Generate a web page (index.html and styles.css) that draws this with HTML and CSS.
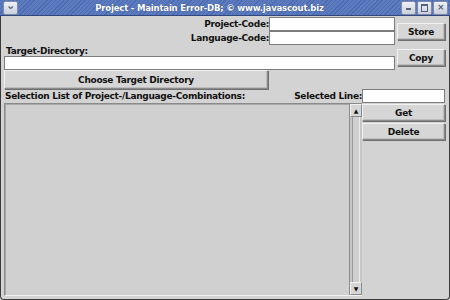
FILE: index.html
```html
<!DOCTYPE html>
<html lang="en">
<head>
    <meta charset="utf-8">
    <title>Project - Maintain Error-DB</title>
    <link rel="stylesheet" href="styles.css">
</head>
<body>
<div class="window">
    <div class="titlebar">
        <div class="tbtn menu"><span class="chev">&#8964;</span></div>
        <div class="title">Project - Maintain Error-DB; &copy; www.javascout.biz</div>
        <div class="tbtns">
            <div class="tbtn"><span class="ico-min"></span></div>
            <div class="tbtn"><span class="ico-max"></span></div>
            <div class="tbtn"><span class="ico-close">&times;</span></div>
        </div>
    </div>
    <div class="content">
        <div class="rowA">
            <div class="codes">
                <div class="line"><span class="label">Project-Code:</span><div class="field codeField"></div></div>
                <div class="line"><span class="label">Language-Code:</span><div class="field codeField"></div></div>
            </div>
            <div class="side"><div class="button">Store</div></div>
        </div>
        <div class="rowB">
            <div class="dir">
                <div class="label">Target-Directory:</div>
                <div class="field dirField"></div>
            </div>
            <div class="side"><div class="button copy">Copy</div></div>
        </div>
        <div class="rowC">
            <div class="button choose">Choose Target Directory</div>
        </div>
        <div class="rowD">
            <span class="label">Selection List of Project-/Language-Combinations:</span>
            <span class="label sel">Selected Line:</span>
            <div class="field selField"></div>
        </div>
        <div class="rowE">
            <div class="list">
                <div class="listArea"></div>
                <div class="scrollbar">
                    <div class="arrow up">&#9650;</div>
                    <div class="track"></div>
                    <div class="arrow down">&#9660;</div>
                </div>
            </div>
            <div class="actions">
                <div class="button">Get</div>
                <div class="button">Delete</div>
            </div>
        </div>
    </div>
</div>
</body>
</html>
```

FILE: styles.css
```css
body{
    margin: 0;
    background: #d3d3d3;
    font-family: "DejaVu Sans", sans-serif;
    font-weight: bold;
    font-size: 9px;
    letter-spacing: -0.3px;
    color: #111;
}
.window{
    width: 450px;
    height: 300px;
    box-sizing: border-box;
    border: 1px solid #3a3a3a;
    border-top: none;
    border-radius: 0 0 4px 4px;
    background: #d3d3d3;
    display: flex;
    flex-direction: column;
}
.titlebar{
    height: 15px;
    margin: 0 -1px;
    background: repeating-linear-gradient(135deg, #4c6bb0 0 1px, #5d7cc0 1px 3px);
    border-bottom: 1px solid #31487e;
    display: flex;
    align-items: center;
    padding: 0 2px 0 3px;
    color: #fff;
}
.title{
    flex: 1;
    text-align: center;
    font-family: "DejaVu Sans Condensed", "DejaVu Sans", sans-serif;
    font-size: 9.5px;
    letter-spacing: -0.2px;
    text-shadow: 0 0 1px #2c3f70;
}
.tbtns{
    display: flex;
    gap: 1px;
}
.tbtn{
    width: 13px;
    height: 12px;
    border: 1px solid #7e8aa8;
    border-radius: 2px;
    background: linear-gradient(#eef0f6, #c9cfdc);
    display: flex;
    align-items: center;
    justify-content: center;
    color: #56617a;
    font-size: 9px;
    line-height: 1;
}
.chev{
    font-size: 11px;
    margin-top: -4px;
}
.ico-min{
    width: 5px;
    height: 2px;
    background: #56617a;
    margin-top: 3px;
}
.ico-max{
    width: 5px;
    height: 5px;
    border: 1px solid #56617a;
    border-top-width: 2px;
}
.content{
    flex: 1;
    display: flex;
    flex-direction: column;
    padding: 0 4px 3px 3px;
}
.label{
    line-height: 12px;
    white-space: nowrap;
}
.field{
    background: #fff;
    border: 1px solid #7c7c7c;
    box-sizing: border-box;
    height: 14px;
}
.button{
    height: 17px;
    box-sizing: border-box;
    border: 1px solid #8a8a8a;
    border-top-color: #f2f2f2;
    border-left-color: #f2f2f2;
    box-shadow: 1px 1px 0 #6f6f6f, inset -1px -1px 0 #bdbdbd;
    background: #d6d6d6;
    display: flex;
    align-items: center;
    justify-content: center;
}
.side{
    width: 48px;
    margin-left: 2px;
    display: flex;
    align-items: center;
}
.side .button{
    flex: 1;
}
.rowA{
    display: flex;
    height: 29px;
    margin-top: 1px;
}
.codes{
    flex: 1;
    display: flex;
    flex-direction: column;
}
.line{
    display: flex;
    justify-content: flex-end;
    align-items: center;
    height: 14px;
}
.codeField{
    width: 126px;
}
.rowB{
    display: flex;
    height: 24px;
}
.dir{
    flex: 1;
    display: flex;
    flex-direction: column;
    justify-content: flex-end;
}
.dir .label{
    padding-left: 2px;
    line-height: 10px;
}
.rowB .side{
    align-items: flex-start;
    padding-top: 3px;
}
.rowC{
    height: 19px;
    display: flex;
}
.choose{
    width: 264px;
    height: 19px;
}
.rowD{
    display: flex;
    align-items: center;
    height: 14px;
}
.rowD .label:first-child{
    flex: 1;
    padding-left: 1px;
}
.selField{
    width: 83px;
}
.rowE{
    flex: 1;
    display: flex;
}
.list{
    flex: 1;
    display: flex;
    border-top: 1px solid #8a8a8a;
    border-left: 1px solid #8a8a8a;
    border-bottom: 1px solid #f0f0f0;
}
.listArea{
    flex: 1;
    background: #d0d0d0;
    border-top: 1px solid #a8a8a8;
    border-left: 1px solid #a8a8a8;
}
.scrollbar{
    width: 12px;
    display: flex;
    flex-direction: column;
    border-left: 1px solid #8a8a8a;
    background: #c6c6c6;
}
.arrow{
    height: 13px;
    font-size: 6px;
    display: flex;
    align-items: center;
    justify-content: center;
    background: #d6d6d6;
    border: 1px solid #8a8a8a;
    border-top-color: #f2f2f2;
    border-left-color: #f2f2f2;
    box-sizing: border-box;
}
.track{
    flex: 1;
    border-left: 1px solid #9a9a9a;
    border-right: 1px solid #eaeaea;
    margin: 0 2px;
    background: #cfcfcf;
}
.actions{
    width: 83px;
    display: flex;
    flex-direction: column;
    gap: 2px;
    padding-top: 1px;
}
```
